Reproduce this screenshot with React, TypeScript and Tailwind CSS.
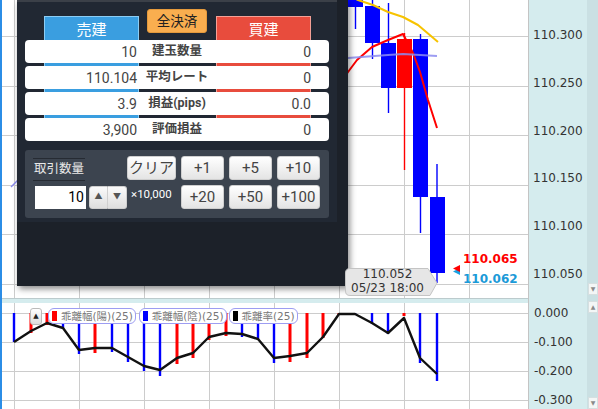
import React from "react";

const vGrid = [14, 79, 144, 209, 274, 339, 404, 469];
const mainH = [36, 86, 135, 185, 234, 284];
const subH = [313, 342, 371, 400];

type Candle = { up: boolean; x: number; l: number; r: number; bt: number; bb: number; wt: number; wb: number };
const candles: Candle[] = [
  { up: false, x: 355.5, l: 348, r: 363, bt: 0, bb: 7, wt: 0, wb: 29 },
  { up: false, x: 372.5, l: 365, r: 380, bt: 6, bb: 43, wt: 0, wb: 59 },
  { up: false, x: 388.5, l: 381, r: 396, bt: 43, bb: 88, wt: 3, wb: 113 },
  { up: true, x: 404.5, l: 397, r: 412, bt: 39, bb: 88, wt: 33, wb: 170 },
  { up: false, x: 420.5, l: 413, r: 428, bt: 39, bb: 197, wt: 34, wb: 233 },
  { up: false, x: 437, l: 430, r: 445, bt: 197, bb: 273, wt: 164, wb: 283 },
];

const redMA = "340,84 348,72 357,60 372,47 388,40 403,34 413,53 420,72 428,100 437,128";
const yellowMA = "350,-4 358,0 373,5 388,12 403,17 418,25 438,42";
const lavMA = "340,59 348,58 388,55 403,54 420,55 437,56";

const subBars: [number, number, "r" | "b"][] = [
  [14, 342, "b"], [31, 333, "r"], [47, 325, "r"], [63, 328, "b"], [79, 354, "b"], [95, 353, "r"],
  [112, 352, "b"], [128, 362, "b"], [144, 371, "b"], [160, 376, "b"], [177, 364, "r"], [193, 358, "r"],
  [209, 340, "r"], [226, 336, "r"], [242, 337, "b"], [258, 339, "b"], [274, 363, "b"], [290, 362, "r"],
  [307, 358, "r"], [323, 338, "r"], [339, 315, "r"], [355, 315, "b"], [372, 324, "b"], [388, 334, "b"],
  [404, 316, "r"], [420, 363, "b"], [437, 381, "b"],
];
const subLine =
  "14,342 31,331 47,323 63,328 79,350 95,348 112,348 128,357 144,366 160,370 177,358 193,353 209,337 226,333 242,334 258,339 274,358 290,356 307,353 323,337 339,314 355,314 372,323 388,333 404,318 420,358 437,374";

const mainLabels = ["110.300", "110.250", "110.200", "110.150", "110.100", "110.050"];
const subLabels = ["0.000", "-0.100", "-0.200", "-0.300"];

function GridLines({ hs, y0, y1 }: { hs: number[]; y0: number; y1: number }) {
  return (
    <g>
      {vGrid.map((x) => (
        <line key={"v" + x} x1={x + 0.5} x2={x + 0.5} y1={y0} y2={y1} stroke="#cccccc" strokeWidth={1} />
      ))}
      {hs.map((y) => (
        <line key={"h" + y} x1={2} x2={528} y1={y + 0.5} y2={y + 0.5} stroke="#cccccc" strokeWidth={1} />
      ))}
    </g>
  );
}

function MainChart() {
  return (
    <svg width={526} height={298} viewBox="2 0 526 298" className="block">
      <GridLines hs={mainH} y0={0} y1={298} />
      <line x1={11} y1={187} x2={18} y2={180} stroke="#8a8aee" strokeWidth={1.5} />
      {candles.map((c, i) => {
        const col = c.up ? "#ff0000" : "#0000ff";
        return (
          <g key={i}>
            <line x1={c.x} x2={c.x} y1={c.wt} y2={c.wb} stroke={col} strokeWidth={1.4} />
            <rect x={c.l} y={c.bt} width={c.r - c.l} height={c.bb - c.bt} fill={col} />
          </g>
        );
      })}
      <polyline points={yellowMA} fill="none" stroke="#f7c300" strokeWidth={2} strokeLinejoin="round" />
      <polyline points={redMA} fill="none" stroke="#ff0000" strokeWidth={2} strokeLinejoin="round" />
      <polyline points={lavMA} fill="none" stroke="#8c8cf0" strokeOpacity={0.85} strokeWidth={2} strokeLinejoin="round" />
      <polygon points="453,271.5 460,268 460,275" fill="#1ba1e2" />
      <polygon points="453,268.5 460,265 460,272" fill="#ff0000" />
    </svg>
  );
}

function SubChart() {
  return (
    <svg width={526} height={106} viewBox="2 303 526 106" className="block">
      <GridLines hs={subH} y0={303} y1={409} />
      {subBars.map(([x, y, c], i) => (
        <rect
          key={i}
          x={c === "r" ? x - 1.5 : x - 1.2}
          y={313}
          width={c === "r" ? 3 : 2.4}
          height={y - 313}
          fill={c === "r" ? "#ff0000" : "#0000ff"}
        />
      ))}
      <polyline points={subLine} fill="none" stroke="#111111" strokeWidth={2.4} strokeLinejoin="round" />
    </svg>
  );
}

function Btn({ w, children }: { w: string; children: React.ReactNode }) {
  return (
    <div
      className={`${w} h-[24px] rounded-[3px] border border-[#cfcfcf] bg-linear-to-b from-white to-[#e4e4e4] flex items-center justify-center text-[15px] leading-none text-[#444]`}
    >
      {children}
    </div>
  );
}

function Row({ l, label, r }: { l: string; label: string; r: string }) {
  return (
    <div className="h-[23px] w-[304px] rounded-[4px] bg-white flex items-center text-[14px] text-[#444] leading-none">
      <div className="w-[112px] text-right">{l}</div>
      <div className="flex-1 text-center font-bold text-[12.5px] whitespace-nowrap">{label}</div>
      <div className="w-[112px] text-right pr-[18px]">{r}</div>
    </div>
  );
}

function Panel() {
  return (
    <div className="absolute left-[17px] top-0 w-[331px] h-[286px] bg-[#1c2129] shadow-[2px_3px_6px_rgba(0,0,0,0.45)] [font-family:Roboto,'Noto_Sans_CJK_JP',sans-serif]">
      <div className="w-[320px] h-[222px] bg-[#212833] border-t-2 border-[#3b4048] pl-[8px]">
        <div className="flex items-start pl-[19px] w-[304px]">
          <div className="mt-[14px] w-[95px] h-[124px] bg-[#3a9ee0] border border-[#8ccdf4] text-center text-white text-[15px] leading-[20px] pt-[3px]">
            売建
          </div>
          <div className="ml-[8px] mt-[7px] w-[60px] h-[24px] rounded-[3px] bg-[#f9ae4f] border border-[#e59a3c] text-center text-[#222] text-[13.5px] leading-[22px]">
            全決済
          </div>
          <div className="ml-[9px] mt-[14px] w-[95px] h-[124px] bg-[#e84c3d] border border-[#f4a096] text-center text-white text-[15px] leading-[20px] pt-[3px]">
            買建
          </div>
        </div>
        <div className="relative z-10 -mt-[100px] flex flex-col gap-[3px]">
          <Row l="10" label="建玉数量" r="0" />
          <Row l="110.104" label="平均レート" r="0" />
          <Row l="3.9" label="損益(pips)" r="0.0" />
          <Row l="3,900" label="評価損益" r="0" />
        </div>
        <div className="mt-[9px] w-[304px] h-[68px] rounded-[3px] bg-[#3c444f] pt-[6px] pr-[9px] flex flex-col gap-[5px]">
          <div className="h-[24px] flex items-start">
            <div className="ml-[8px] mt-[2px] w-[52px] h-[23px] border-y border-[#262b33] flex items-center justify-center text-[12.5px] text-[#e8e8e8] whitespace-nowrap">
              取引数量
            </div>
            <div className="ml-auto flex gap-[5px]">
              <Btn w="w-[49px]">クリア</Btn>
              <Btn w="w-[43px]">+1</Btn>
              <Btn w="w-[43px]">+5</Btn>
              <Btn w="w-[43px]">+10</Btn>
            </div>
          </div>
          <div className="h-[24px] flex items-center">
            <div className="ml-[10px] w-[51px] h-[23px] bg-white text-right pr-[2px] text-[14px] leading-[23px] text-black">
              10
            </div>
            <div className="ml-[3px] flex w-[38px] h-[23px]">
              <div className="w-[19px] h-full rounded-l-[3px] border border-[#cfcfcf] bg-linear-to-b from-[#fafafa] to-[#dedede] flex items-center justify-center text-[8px] text-[#555]">
                ▲
              </div>
              <div className="w-[19px] h-full rounded-r-[3px] border border-l-0 border-[#cfcfcf] bg-linear-to-b from-[#fafafa] to-[#dedede] flex items-center justify-center text-[8px] text-[#555]">
                ▼
              </div>
            </div>
            <div className="ml-[4px] mb-[5px] text-[11.5px] leading-none text-white whitespace-nowrap">×10,000</div>
            <div className="ml-auto flex gap-[5px]">
              <Btn w="w-[43px]">+20</Btn>
              <Btn w="w-[43px]">+50</Btn>
              <Btn w="w-[43px]">+100</Btn>
            </div>
          </div>
        </div>
      </div>
    </div>
  );
}

function ScrollBtn({ up }: { up?: boolean }) {
  return (
    <div className="ml-[1px] w-[10px] h-[12px] bg-[#f3f6f6] border border-[#d6dfe0] flex items-center justify-center text-[6px] leading-none text-[#8a8a8a]">
      {up ? "▲" : "▼"}
    </div>
  );
}

function Pill({ color, text }: { color: string; text: string }) {
  return (
    <div className="h-[16px] rounded-[6px] border border-[#9d9df2] bg-white flex items-center pl-[3px] pr-[2px]">
      <div className={`w-[5px] h-[10px] ${color}`} />
      <div className="ml-[4px] text-[10.5px] leading-none text-[#777] whitespace-nowrap">{text}</div>
    </div>
  );
}

export default function App() {
  return (
    <div className="relative w-[598px] h-[409px] overflow-hidden bg-white flex [font-family:'DejaVu_Sans','Noto_Sans_CJK_JP',sans-serif]">
      <div className="w-[2px] h-full bg-[#2b8de6]" />
      <div className="w-[526px] flex flex-col">
        <div className="h-[298px]">
          <MainChart />
        </div>
        <div className="h-[5px] border-t border-[#bccbcd] bg-[#d5ecee]" />
        <div className="flex-1">
          <SubChart />
        </div>
      </div>
      <div className="w-[59px] h-full bg-[#d5ecee] border-l border-[#c4c4c4] flex flex-col text-[12px] text-[#333] leading-none">
        <div className="h-[298px] pt-[11.2px] flex flex-col">
          {mainLabels.map((t) => (
            <div key={t} className="h-[49.6px] flex items-center pl-[4px]">
              {t}
            </div>
          ))}
        </div>
        <div className="h-[5px]" />
        <div className="flex-1 overflow-hidden">
          <div className="-mt-[5px] flex flex-col">
            {subLabels.map((t) => (
              <div key={t} className="h-[29.2px] flex items-center pl-[5px]">
                {t}
              </div>
            ))}
          </div>
        </div>
      </div>
      <div className="w-[11px] h-full bg-[#cae0e3] flex flex-col">
        <div className="h-[298px] flex flex-col justify-end pb-[3px]">
          <ScrollBtn />
        </div>
        <div className="flex-1 flex flex-col justify-between pt-[3px]">
          <ScrollBtn up />
          <ScrollBtn />
        </div>
      </div>

      <Panel />

      <div className="absolute left-[345px] top-[268px] w-[93px] h-[28px]">
        <svg width={93} height={28} className="absolute inset-0">
          <path
            d="M5,0.5 H83 L92,15 L85,27.5 H5 Q0.5,27.5 0.5,23 V5 Q0.5,0.5 5,0.5 Z"
            fill="#e6e6e6"
            stroke="#c4c4c4"
            strokeWidth={1}
          />
        </svg>
        <div className="relative w-[85px] flex flex-col items-center text-[12px] leading-[13.5px] text-[#333] pt-[0px]">
          <div>110.052</div>
          <div>05/23 18:00</div>
        </div>
      </div>

      <div className="absolute left-[463px] top-[252px] text-[12px] leading-[14px] font-bold text-[#ff0000]">110.065</div>
      <div className="absolute left-[463px] top-[272px] text-[12px] leading-[14px] font-bold text-[#1b9ad8]">110.062</div>

      <div className="absolute left-[30px] top-[308px] flex items-start">
        <div className="w-[12px] h-[17px] rounded-[3px] border border-[#bbbbbb] bg-linear-to-b from-white to-[#dddddd] flex items-center justify-center text-[7px] text-[#222]">
          ▲
        </div>
        <div className="ml-[6px]">
          <Pill color="bg-[#ff0000]" text="乖離幅(陽)(25)" />
        </div>
        <div className="ml-[3px]">
          <Pill color="bg-[#0000ff]" text="乖離幅(陰)(25)" />
        </div>
        <div className="ml-[2px]">
          <Pill color="bg-black" text="乖離率(25)" />
        </div>
      </div>
    </div>
  );
}
